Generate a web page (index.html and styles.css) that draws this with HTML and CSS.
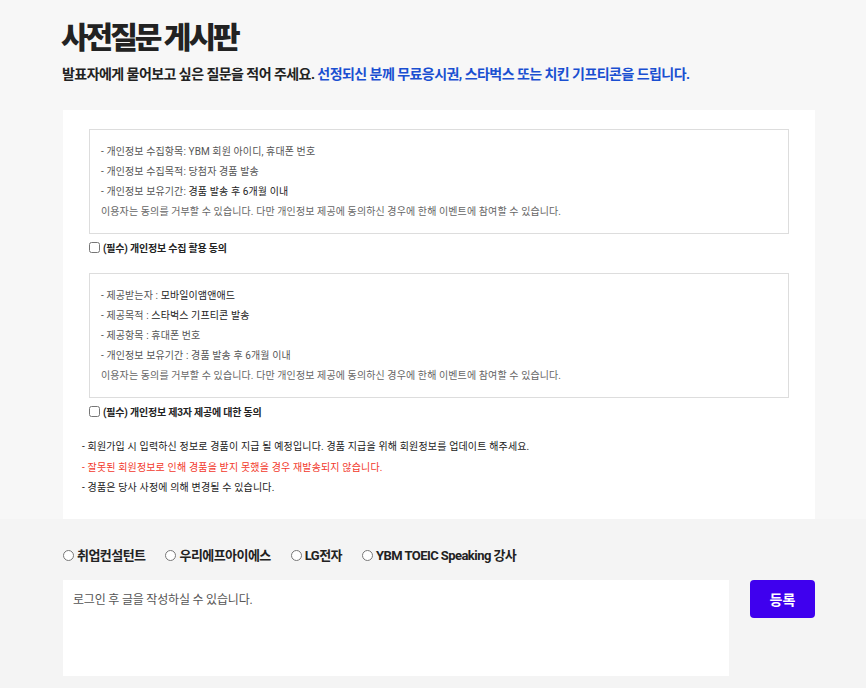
FILE: index.html
```html
<!DOCTYPE html>
<html lang="ko">
<head>
<meta charset="utf-8">
<title>사전질문 게시판</title>
<link rel="stylesheet" href="styles.css">
</head>
<body>
<div class="top">
	<div class="wrap">
		<h1>사전질문 게시판</h1>
		<p class="lead">발표자에게 물어보고 싶은 질문을 적어 주세요. <span class="blue">선정되신 분께 무료응시권, 스타벅스 또는 치킨 기프티콘을 드립니다.</span></p>

		<div class="panel">
			<div class="terms">
				<p>- 개인정보 수집항목: YBM 회원 아이디, 휴대폰 번호</p>
				<p>- 개인정보 수집목적: 당첨자 경품 발송</p>
				<p>- 개인정보 보유기간: <strong>경품 발송 후 6개월 이내</strong></p>
				<p class="light">이용자는 동의를 거부할 수 있습니다. 다만 개인정보 제공에 동의하신 경우에 한해 이벤트에 참여할 수 있습니다.</p>
			</div>
			<label class="agree"><input type="checkbox"> (필수) 개인정보 수집 활용 동의</label>

			<div class="terms">
				<p>- 제공받는자 : <strong>모바일이앰앤애드</strong></p>
				<p>- 제공목적 : <strong>스타벅스 기프티콘 발송</strong></p>
				<p>- 제공항목 : 휴대폰 번호</p>
				<p>- 개인정보 보유기간 : 경품 발송 후 6개월 이내</p>
				<p class="light">이용자는 동의를 거부할 수 있습니다. 다만 개인정보 제공에 동의하신 경우에 한해 이벤트에 참여할 수 있습니다.</p>
			</div>
			<label class="agree"><input type="checkbox"> (필수) 개인정보 제3자 제공에 대한 동의</label>

			<ul class="notes">
				<li>- 회원가입 시 입력하신 정보로 경품이 지급 될 예정입니다. 경품 지급을 위해 회원정보를 업데이트 해주세요.</li>
				<li class="red">- 잘못된 회원정보로 인해 경품을 받지 못했을 경우 재발송되지 않습니다.</li>
				<li>- 경품은 당사 사정에 의해 변경될 수 있습니다.</li>
			</ul>
		</div>
	</div>
</div>

<div class="bottom">
	<div class="wrap">
		<div class="speakers">
			<label><input type="radio" name="who"> 취업컨설턴트</label>
			<label><input type="radio" name="who"> 우리에프아이에스</label>
			<label><input type="radio" name="who"> LG전자</label>
			<label><input type="radio" name="who"> YBM TOEIC Speaking 강사</label>
		</div>
		<form class="write">
			<textarea placeholder="로그인 후 글을 작성하실 수 있습니다."></textarea>
			<button type="button">등록</button>
		</form>
	</div>
</div>
</body>
</html>
```

FILE: styles.css
```css
* {
	box-sizing: border-box;
}

body {
	margin: 0;
	font-family: Roboto, "Noto Sans CJK KR", sans-serif;
	color: #222;
	background: #f4f4f4;
}

p, ul, h1 {
	margin: 0;
	padding: 0;
}

.wrap {
	width: 752px;
	margin-left: 63px;
}

.top {
	background: #f7f7f7;
	padding-top: 17px;
}

h1 {
	font-size: 30px;
	font-weight: 900;
	line-height: 42px;
	letter-spacing: -3px;
	margin-left: -2px;
}

.lead {
	font-size: 14px;
	font-weight: 700;
	letter-spacing: -0.55px;
	line-height: 20px;
	margin: 5px 0 26px -1px;
}

.blue {
	color: #1a4fd1;
}

.panel {
	background: #fff;
	padding: 19px 26px 20px;
}

.terms {
	border: 1px solid #ddd;
	padding: 12px 11px 11px;
	font-size: 10px;
	line-height: 20px;
	letter-spacing: 0.1px;
	color: #555;
}

.terms strong {
	font-weight: normal;
	color: #222;
}

.terms .light {
	color: #666;
}

.agree {
	display: flex;
	align-items: center;
	height: 20px;
	margin: 3px 0 16px;
	font-size: 10px;
	font-weight: 700;
	letter-spacing: -0.2px;
}

.agree input {
	width: 11px;
	height: 11px;
	margin: 0 3px 0 0;
}

.notes {
	list-style: none;
	margin-left: -7px;
	font-size: 10px;
	line-height: 20.5px;
	letter-spacing: 0.15px;
}

.notes .red {
	color: #f2392c;
}

.bottom {
	padding: 27px 0 12px;
}

.speakers {
	display: flex;
	gap: 20px;
	font-size: 13px;
	font-weight: 700;
	letter-spacing: -0.55px;
	line-height: 20px;
}

.speakers label {
	display: flex;
	align-items: center;
}

.speakers input {
	width: 11px;
	height: 11px;
	margin: 0 3px 0 0;
}

.write {
	display: flex;
	align-items: flex-start;
	gap: 21px;
	margin-top: 14px;
}

textarea {
	width: 666px;
	height: 96px;
	border: 0;
	padding: 10px;
	resize: none;
	font-family: Roboto, "Noto Sans CJK KR", sans-serif;
	font-size: 12px;
	letter-spacing: -0.2px;
	background: #fff;
}

textarea::placeholder {
	color: #555;
}

button {
	width: 65px;
	height: 38px;
	border: 0;
	border-radius: 4px;
	background: #3f00ee;
	color: #fff;
	font-family: Roboto, "Noto Sans CJK KR", sans-serif;
	font-size: 14px;
	font-weight: 700;
}
```
